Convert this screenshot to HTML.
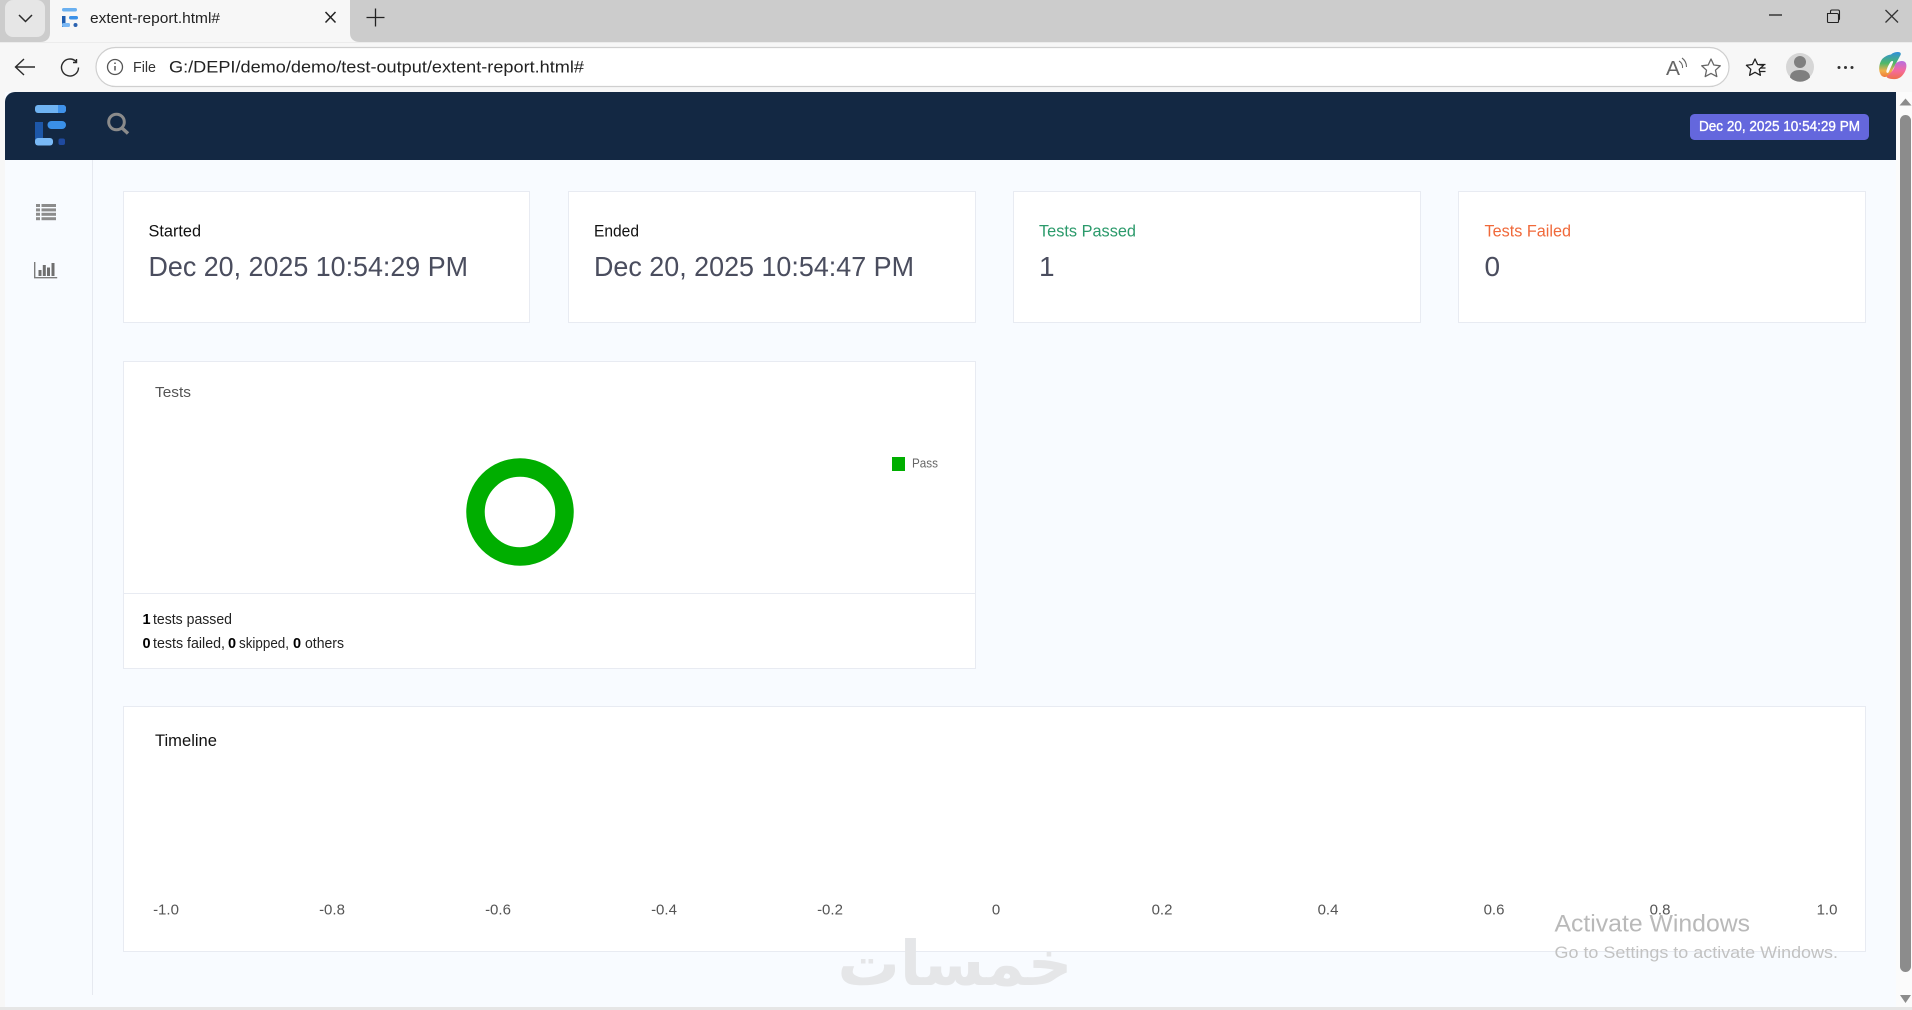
<!DOCTYPE html>
<html lang="en"><head><meta charset="utf-8"><title>extent-report.html#</title>
<style>
html,body{margin:0;padding:0;width:1912px;height:1010px;overflow:hidden;background:#f8fbff}
svg{display:block;position:absolute;left:0;top:0}
text{font-family:"Liberation Sans","DejaVu Sans",sans-serif}
</style></head><body>
<svg width="1912" height="1010" viewBox="0 0 1912 1010" xmlns="http://www.w3.org/2000/svg">
<defs><linearGradient id="cp1" x1="0" y1="0" x2="0" y2="1"><stop offset="0" stop-color="#2f8fdc"/><stop offset=".45" stop-color="#4fb868"/><stop offset=".75" stop-color="#f2b04a"/><stop offset="1" stop-color="#ef7a3a"/></linearGradient>
<linearGradient id="cp2" x1="0" y1="0" x2="0" y2="1"><stop offset="0" stop-color="#b76ee0"/><stop offset=".55" stop-color="#f56a9c"/><stop offset="1" stop-color="#ee6f4a"/></linearGradient></defs>
<!-- tab strip -->
<rect width="1912" height="42" fill="#cccccc"/>
<rect x="5" y="0" width="40" height="37" rx="8" fill="#e6e6e6"/>
<path d="M19 15l6.500 6.500L32 15" fill="none" stroke="#2b2b2b" stroke-width="1.500"/>
<path d="M40 42c6 0 10-3 10-9V0h300v33c0 6 4 9 10 9z" fill="#f7f7f7"/>
<g><rect x="62" y="8" width="15" height="3.500" rx="1.700" fill="#6ab0f0"/><rect x="69" y="16" width="9" height="3.500" rx="1.700" fill="#3a90e8"/><rect x="62" y="16" width="3.500" height="11" fill="#1e5cae"/><rect x="62" y="23" width="8" height="4" rx="1.500" fill="#7ab8f5"/><circle cx="75.500" cy="25" r="2" fill="#2a62b0"/></g>
<text x="90" y="23" font-size="15" fill="#222" textLength="130" lengthAdjust="spacingAndGlyphs">extent-report.html#</text>
<path d="M325.500 12l10 10.500M335.500 12l-10 10.500" stroke="#222" stroke-width="1.500" fill="none"/>
<path d="M366.500 17.500h18M375.500 8.500v18" stroke="#222" stroke-width="1.300" fill="none"/>
<path d="M1769 15h13" stroke="#111" stroke-width="1.200"/>
<path d="M1827.500 13.500h9.500a1.500 1.500 0 0 1 1.500 1.500v6.500a1 1 0 0 1-1 1h-9a1 1 0 0 1-1-1v-7zM1830.500 13v-1.500a1.500 1.500 0 0 1 1.500-1.500h6a1.500 1.500 0 0 1 1.500 1.500v7a1.500 1.500 0 0 1-1 1.500" fill="none" stroke="#222" stroke-width="1.100"/>
<path d="M1885.500 10l12.500 12.500M1898 10l-12.500 12.500" stroke="#333" stroke-width="1.300"/>
<!-- toolbar -->
<rect y="42" width="1912" height="50" fill="#f7f7f7"/>
<rect y="42" width="1912" height="1" fill="#ececec"/>
<path d="M35 67H16M24 59l-8.500 8 8.500 8" fill="none" stroke="#2b2b2b" stroke-width="1.400"/>
<path d="M76 61.500a8.500 8.500 0 1 0 2.500 6M76.500 59v3.500H73" fill="none" stroke="#2b2b2b" stroke-width="1.400"/>
<rect x="96" y="47.500" width="1633" height="39" rx="19.500" fill="#fff" stroke="#cfcfcf" stroke-width="1.200"/>
<circle cx="115" cy="67" r="7.500" fill="none" stroke="#555" stroke-width="1.300"/>
<path d="M115 66v4.500M115 62.500v1.500" stroke="#555" stroke-width="1.500"/>
<text x="133" y="72" font-size="14.500" fill="#333" textLength="23" lengthAdjust="spacingAndGlyphs">File</text>
<text x="169" y="72.500" font-size="17" fill="#222" textLength="415" lengthAdjust="spacingAndGlyphs">G:/DEPI/demo/demo/test-output/extent-report.html#</text>
<text x="1666" y="75" font-size="20" fill="#666" textLength="14" lengthAdjust="spacingAndGlyphs">A</text>
<path d="M1679 61a7 7 0 0 1 3.500 7M1682 58a11 11 0 0 1 4.500 9" fill="none" stroke="#666" stroke-width="1.100"/>
<path d="M1711 59l2.800 6 6.500.8-4.800 4.400 1.300 6.400-5.800-3.200-5.800 3.200 1.300-6.400-4.800-4.400 6.500-.8z" fill="none" stroke="#666" stroke-width="1.300" stroke-linejoin="round"/>
<path d="M1755 59l2.600 5.500 6 .8-4.400 4 1.200 6-5.400-3-5.400 3 1.200-6-4.400-4 6-.8z" fill="none" stroke="#222" stroke-width="1.300" stroke-linejoin="round"/>
<path d="M1759 64.500h6.500M1760 68h5.500M1760 71.500h5.500" stroke="#222" stroke-width="1.200"/>
<circle cx="1800" cy="67" r="14" fill="#d6d6d6"/>
<circle cx="1800" cy="62" r="6" fill="#7f7f7f"/>
<path d="M1790 77.500c0-5.500 4.500-7.500 10-7.500s10 2 10 7.500a14 14 0 0 1-20 0z" fill="#7f7f7f"/>
<circle cx="1839" cy="67.500" r="1.500" fill="#333"/><circle cx="1845.500" cy="67.500" r="1.500" fill="#333"/><circle cx="1852" cy="67.500" r="1.500" fill="#333"/>
<g transform="translate(-2 -0.500)">
<path d="M1893 55c2-2 5-2.500 7-2.500 3 0 3.500 2 2 4l-7 13c-1.500 3-2.500 7.500-8 8-2 0-4-1-5-4-1.500-3-1-9 1.500-13 2-3 6-5 9.500-5.500z" fill="url(#cp1)"/>
<path d="M1899 63c3-2 7-2 8.500 0 1.500 2 1 6-.5 9-2 4-5 7-9 7.500-3 .3-7 0-9-1.500-1-1 1-2 2-3 2-2 4-4 5-6.500 1-2.500 1-4.500 3-5.500z" fill="url(#cp2)"/>
<path d="M1893 62c1.500-1 2.500-.5 2 1l-4 9c-.5 1.500-2 2-2.500.8-.5-1 .5-3.500 1.500-6 1-2 2-4 3-4.800z" fill="#fbfbfb"/>
</g>
<!-- page -->
<rect x="5" y="160" width="1891" height="847" fill="#f8fbff"/>
<path d="M5 160V102a10 10 0 0 1 10-10H1896v68z" fill="#132843"/>
<rect x="92" y="160" width="1" height="835" fill="#e6e9f0"/>
<rect x="0" y="92" width="5" height="918" fill="#f7f7f7"/>
<rect x="0" y="1007" width="1912" height="3" fill="#e6e6e6"/>
<!-- logo -->
<rect x="35" y="105" width="31" height="8" rx="3" fill="#6fb3f2"/><path d="M58 105h5a3 3 0 0 1 3 3v2a3 3 0 0 1-3 3h-5z" fill="#3f92ea"/>
<rect x="47.500" y="121" width="18.500" height="8" rx="4" fill="#3a90e8"/>
<rect x="35" y="122" width="8" height="20" fill="#1d57a8"/>
<rect x="35" y="138" width="18" height="7.500" rx="3" fill="#79b9f6"/>
<rect x="58.500" y="138.500" width="6.500" height="6.500" rx="2" fill="#1f4aa0"/>
<!-- search -->
<circle cx="116.500" cy="122" r="7.800" fill="none" stroke="#8b8b8b" stroke-width="3"/>
<path d="M122 128l6 5.500" stroke="#8b8b8b" stroke-width="3.400"/>
<!-- side icons -->
<g fill="#8c8c8c"><rect x="36" y="204" width="4" height="3"/><rect x="41.500" y="204" width="14.500" height="3"/><rect x="36" y="208.400" width="4" height="3"/><rect x="41.500" y="208.400" width="14.500" height="3"/><rect x="36" y="212.800" width="4" height="3"/><rect x="41.500" y="212.800" width="14.500" height="3"/><rect x="36" y="217.200" width="4" height="3"/><rect x="41.500" y="217.200" width="14.500" height="3"/></g>
<path d="M34.700 262v15.700h22.500" fill="none" stroke="#7c7c7c" stroke-width="1.400"/>
<g fill="#6f6f6f"><rect x="38.500" y="270" width="3" height="6"/><rect x="42.800" y="265" width="3" height="11"/><rect x="47" y="267.500" width="3" height="8.500"/><rect x="51.500" y="263" width="3" height="13"/></g>
<!-- cards -->
<g fill="#fff" stroke="#e8ebf2" stroke-width="1">
<rect x="123.500" y="191.500" width="406" height="131"/>
<rect x="568.500" y="191.500" width="407" height="131"/>
<rect x="1013.500" y="191.500" width="407" height="131"/>
<rect x="1458.500" y="191.500" width="407" height="131"/>
<rect x="123.500" y="361.500" width="852" height="307"/>
<rect x="123.500" y="706.500" width="1742" height="245"/>
</g>
<rect x="124" y="593" width="851" height="1" fill="#e8ebf2"/>
<text x="148.500" y="236.500" font-size="16.500" fill="#111" textLength="52.500" lengthAdjust="spacingAndGlyphs">Started</text>
<text x="148.500" y="276" font-size="28" fill="#4a4d5e" textLength="319.500" lengthAdjust="spacingAndGlyphs">Dec 20, 2025 10:54:29 PM</text>
<text x="594" y="236.500" font-size="16.500" fill="#111" textLength="45" lengthAdjust="spacingAndGlyphs">Ended</text>
<text x="594" y="276" font-size="28" fill="#4a4d5e" textLength="320" lengthAdjust="spacingAndGlyphs">Dec 20, 2025 10:54:47 PM</text>
<text x="1039" y="236.500" font-size="16.500" fill="#2b9a6b" textLength="97" lengthAdjust="spacingAndGlyphs">Tests Passed</text>
<text x="1039" y="276" font-size="28" fill="#4a4d5e">1</text>
<text x="1484.500" y="236.500" font-size="16.500" fill="#f0693a" textLength="86.500" lengthAdjust="spacingAndGlyphs">Tests Failed</text>
<text x="1484.500" y="276" font-size="28" fill="#4a4d5e">0</text>
<text x="155" y="397" font-size="15" fill="#555" textLength="36" lengthAdjust="spacingAndGlyphs">Tests</text>
<circle cx="520" cy="512" r="44.500" fill="none" stroke="#00ae00" stroke-width="18.500"/>
<rect x="892" y="457" width="13" height="14" fill="#00ae00"/>
<text x="912" y="467.500" font-size="12.500" fill="#666" textLength="26" lengthAdjust="spacingAndGlyphs">Pass</text>
<text x="142.500" y="624" font-size="14.500" font-weight="bold" fill="#000">1</text>
<text x="153" y="624" font-size="14.500" fill="#222" textLength="79" lengthAdjust="spacingAndGlyphs">tests passed</text>
<text x="142.500" y="648" font-size="14.500" font-weight="bold" fill="#000">0</text>
<text x="153" y="648" font-size="14.500" fill="#222" textLength="72" lengthAdjust="spacingAndGlyphs">tests failed,</text>
<text x="228" y="648" font-size="14.500" font-weight="bold" fill="#000">0</text>
<text x="239" y="648" font-size="14.500" fill="#222" textLength="50" lengthAdjust="spacingAndGlyphs">skipped,</text>
<text x="293" y="648" font-size="14.500" font-weight="bold" fill="#000">0</text>
<text x="305" y="648" font-size="14.500" fill="#222" textLength="39" lengthAdjust="spacingAndGlyphs">others</text>
<text x="155" y="746" font-size="16.500" fill="#111" textLength="62" lengthAdjust="spacingAndGlyphs">Timeline</text>
<g font-size="15" fill="#555" text-anchor="middle">
<text x="166" y="914.500">-1.0</text><text x="332" y="914.500">-0.8</text><text x="498" y="914.500">-0.6</text><text x="664" y="914.500">-0.4</text><text x="830" y="914.500">-0.2</text><text x="996" y="914.500">0</text><text x="1162" y="914.500">0.2</text><text x="1328" y="914.500">0.4</text><text x="1494" y="914.500">0.6</text><text x="1660" y="914.500">0.8</text><text x="1827" y="914.500">1.0</text>
</g>
<!-- badge -->
<rect x="1690" y="114" width="179" height="26" rx="4.500" fill="#6467dd"/>
<text x="1699" y="131" font-size="14.500" fill="#fff" stroke="#fff" stroke-width="0.350" textLength="161" lengthAdjust="spacingAndGlyphs">Dec 20, 2025 10:54:29 PM</text>
<!-- watermark -->
<text x="955" y="985" font-size="62" font-weight="bold" fill="#e5e6e8" text-anchor="middle" direction="rtl" style="font-family:'DejaVu Sans',sans-serif">خمسات</text>
<!-- activation -->
<text x="1554.500" y="931.500" font-size="24" fill="#b9b9b9" textLength="195.500" lengthAdjust="spacingAndGlyphs">Activate Windows</text>
<text x="1554.500" y="958" font-size="16.500" fill="#c2c2c2" textLength="283.500" lengthAdjust="spacingAndGlyphs">Go to Settings to activate Windows.</text>
<!-- scrollbar -->
<rect x="1896" y="92" width="16" height="915" fill="#fbfbfb"/>
<rect x="1900" y="115" width="11" height="857" rx="5.500" fill="#8c8c8c"/>
<path d="M1905.500 98.500l6 7h-12z" fill="#8c8c8c"/>
<path d="M1905.500 1003l-5.500-8h11z" fill="#8c8c8c"/>
</svg>
</body></html>
